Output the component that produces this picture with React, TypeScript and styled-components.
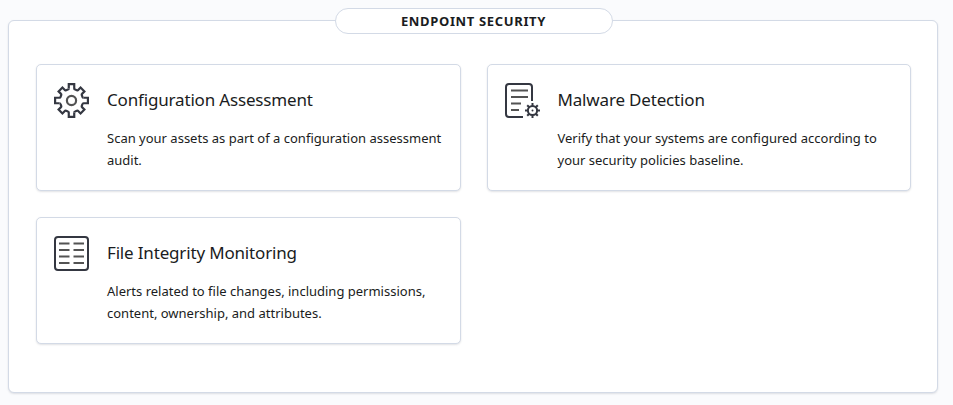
import React from "react";
import styled, { createGlobalStyle } from "styled-components";

const GlobalStyle = createGlobalStyle`
  * { box-sizing: border-box; }
  body {
    margin: 0;
    background: #fafbfd;
    color: #1a1c21;
    font-family: "Noto Sans", sans-serif;
  }
`;

const Page = styled.main`
  padding: 8px 15px 12px 8px;
`;

const Panel = styled.section`
  display: flex;
  flex-direction: column;
  margin-top: 12px;
  padding: 0 26px 48px 27px;
  background: #fff;
  border: 1px solid #d3dae6;
  border-radius: 6px;
  box-shadow: 0 1px 2px rgba(105, 112, 125, 0.2);
`;

const PanelTitle = styled.h2`
  align-self: center;
  min-width: 278px;
  margin: -13px 0 30px;
  padding: 0 16px;
  border: 1px solid #d3dae6;
  border-radius: 13px;
  background: #fff;
  font-size: 13px;
  font-weight: 700;
  line-height: 24px;
  letter-spacing: 0.05em;
  text-align: center;
  text-transform: uppercase;
`;

const CardGrid = styled.div`
  display: grid;
  grid-template-columns: repeat(2, minmax(0, 1fr));
  gap: 26px;
`;

const Card = styled.button`
  display: flex;
  align-items: flex-start;
  gap: 18px;
  padding: 18px 17px 19px;
  border: 1px solid #d3dae6;
  border-radius: 5px;
  background: #fff;
  box-shadow: 0 1px 2px rgba(105, 112, 125, 0.2);
  color: inherit;
  font: inherit;
  text-align: left;
  cursor: pointer;
`;

const Icon = styled.svg`
  flex: none;
  width: 35px;
  height: 35px;
  fill: none;
  stroke: #343741;
  stroke-width: 2;
`;

const CardBody = styled.span`
  display: block;
`;

const CardTitle = styled.span`
  display: block;
  margin-bottom: 10px;
  font-size: 17px;
  line-height: 34px;
  letter-spacing: -0.01em;
`;

const CardText = styled.span`
  display: block;
  color: #1a1c21;
  font-size: 13px;
  line-height: 22px;
`;

const GEAR_QUARTER =
  "M13.5 5V1h5v4q0 .8 .8 1l1.6 .6q.8 .3 1.2 -.2L24.3 4.2l3.5 3.5L25.6 9.9q-.5 .4 -.2 1.2l.6 1.6q.2 .8 1 .8";

const GearIcon = () => (
  <Icon viewBox="0 0 32 32" aria-hidden="true">
    {[0, 90, 180, 270].map((angle) => (
      <path key={angle} d={GEAR_QUARTER} transform={`rotate(${angle} 16 16)`} />
    ))}
    <circle cx="16" cy="16" r="4.2" stroke="#535353" />
  </Icon>
);

const ReportGearIcon = () => (
  <Icon viewBox="0 0 35 35" aria-hidden="true">
    <path d="M18 34H4a3 3 0 0 1-3-3V4a3 3 0 0 1 3-3h20a3 3 0 0 1 3 3v14" />
    <path d="M6 7.5h17M6 14h17M6 20.5h10M6 27h8" stroke="#535353" />
    <circle cx="27.5" cy="27.5" r="4.6" />
    <circle cx="27.5" cy="27.5" r="1" fill="#343741" stroke="none" />
    {[0, 45, 90, 135, 180, 225, 270, 315].map((angle) => (
      <path key={angle} d="M27.5 23v-3" transform={`rotate(${angle} 27.5 27.5)`} />
    ))}
  </Icon>
);

const ColumnsIcon = () => (
  <Icon viewBox="0 0 35 35" aria-hidden="true">
    <rect x="1" y="1" width="33" height="33" rx="3" />
    <path
      d="M5 7.5h10.500M19.500 7.500h10.500M5 14h10.500M19.500 14h10.500M5 20.500h10.500M19.500 20.500h10.500M5 27h10.500M19.500 27h10.500"
      stroke="#535353"
    />
  </Icon>
);

const modules = [
  {
    title: "Configuration Assessment",
    text: "Scan your assets as part of a configuration assessment audit.",
    Glyph: GearIcon,
  },
  {
    title: "Malware Detection",
    text: "Verify that your systems are configured according to your security policies baseline.",
    Glyph: ReportGearIcon,
  },
  {
    title: "File Integrity Monitoring",
    text: "Alerts related to file changes, including permissions, content, ownership, and attributes.",
    Glyph: ColumnsIcon,
  },
];

export default function App() {
  return (
    <>
      <GlobalStyle />
      <Page>
        <Panel aria-labelledby="panel-title">
          <PanelTitle id="panel-title">Endpoint security</PanelTitle>
          <CardGrid>
            {modules.map(({ title, text, Glyph }) => (
              <Card key={title} type="button">
                <Glyph />
                <CardBody>
                  <CardTitle>{title}</CardTitle>
                  <CardText>{text}</CardText>
                </CardBody>
              </Card>
            ))}
          </CardGrid>
        </Panel>
      </Page>
    </>
  );
}
